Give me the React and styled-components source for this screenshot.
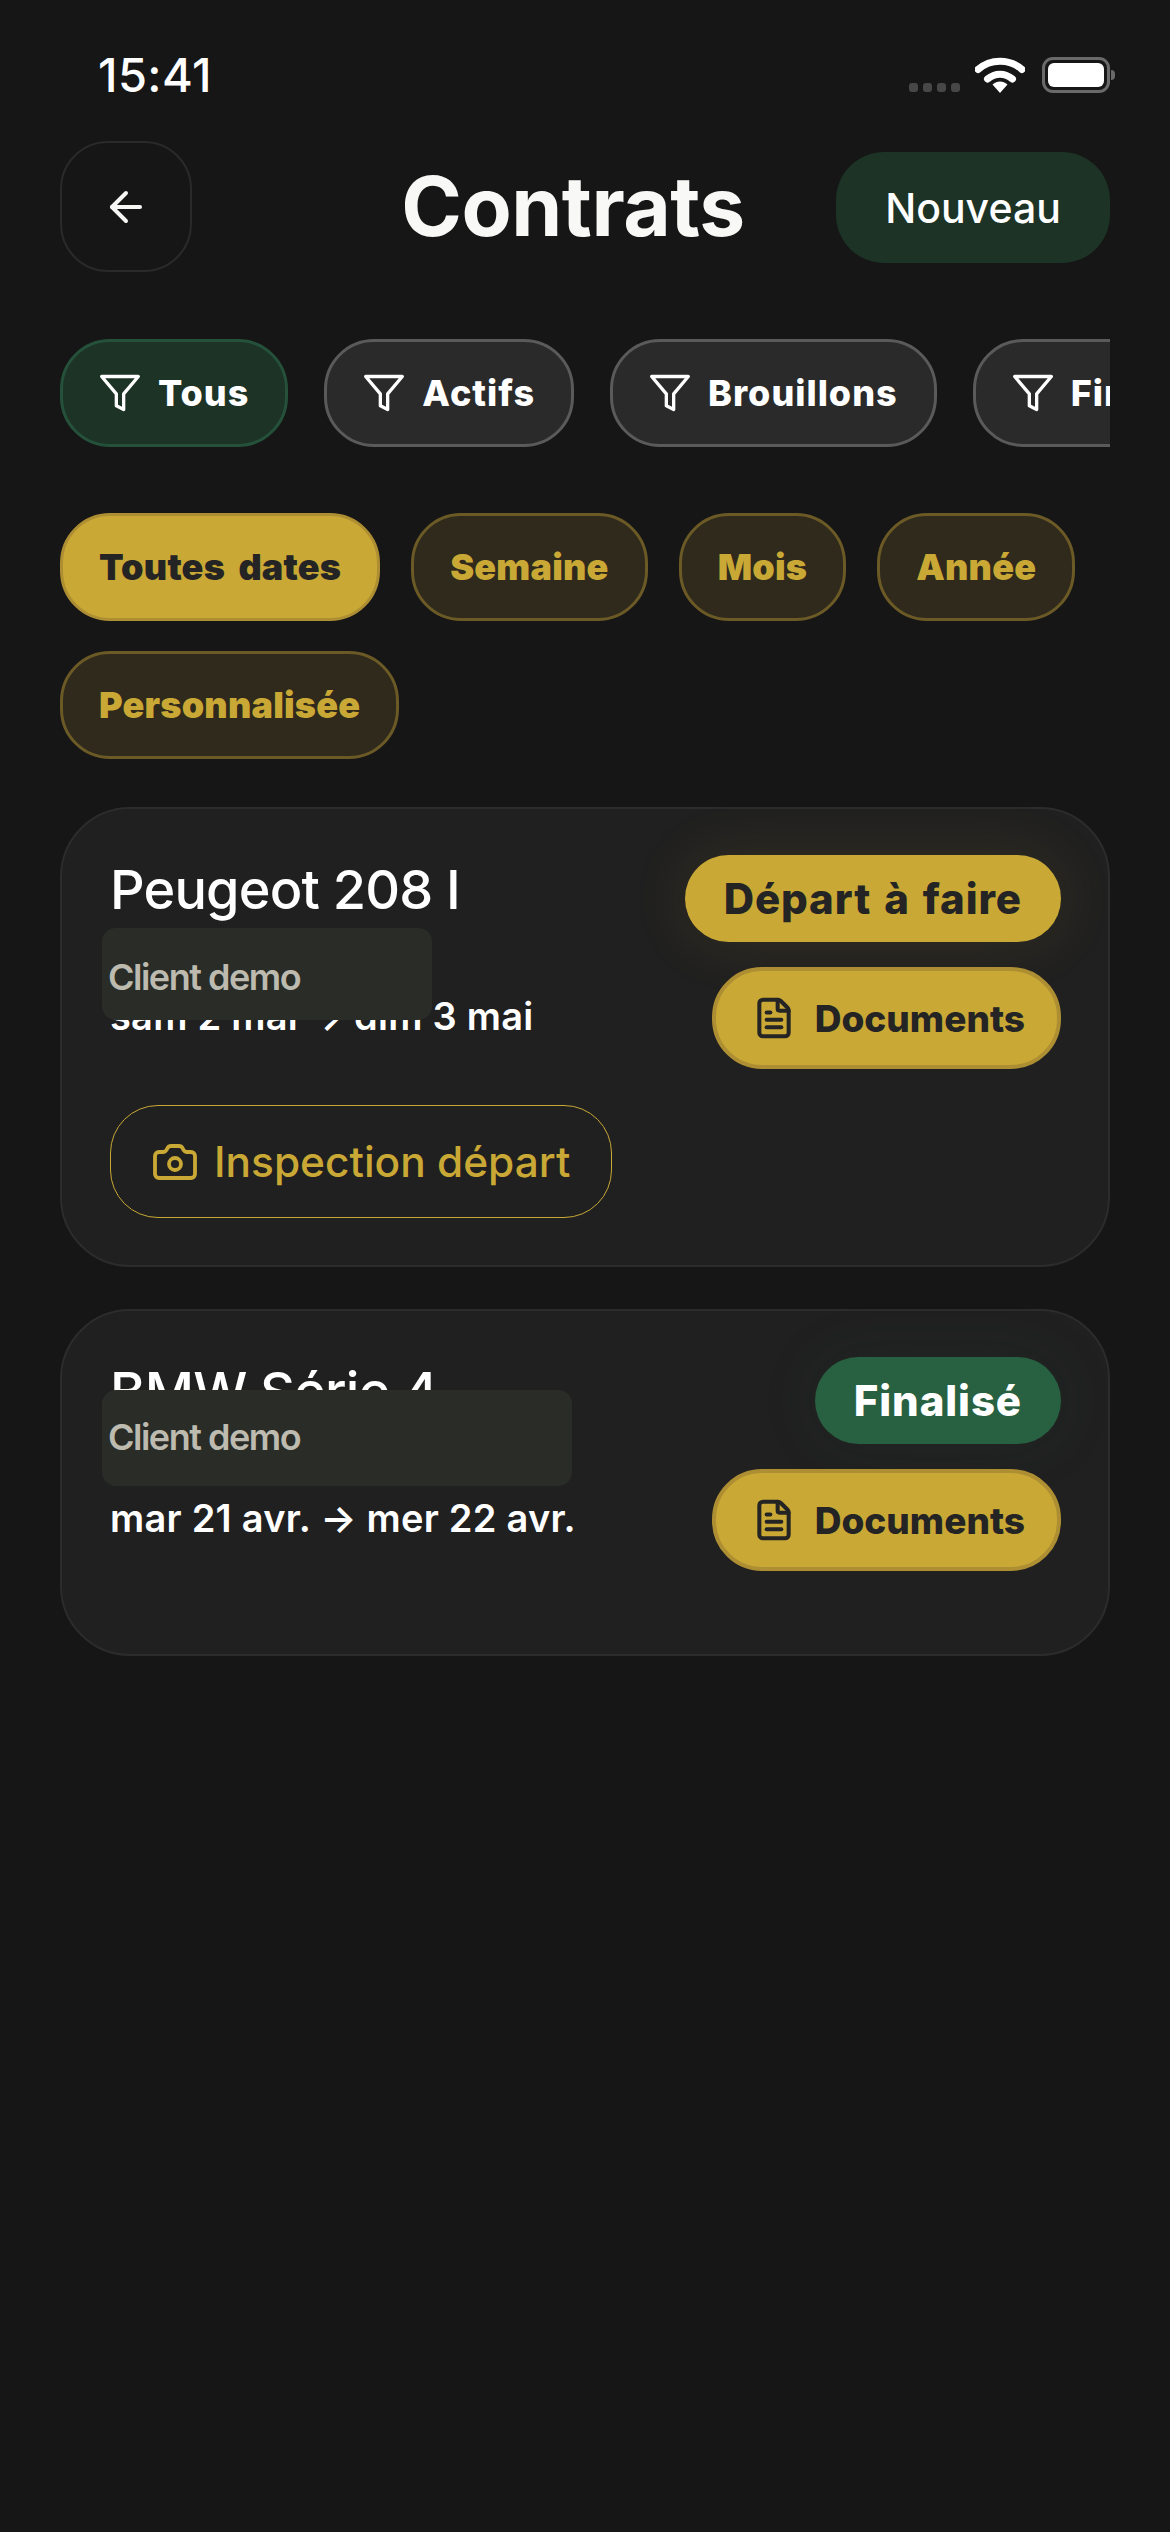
import React from 'react';
import styled, { createGlobalStyle } from 'styled-components';
import { ArrowLeft, Camera, FileText } from 'lucide-react';
import { FiFilter } from 'react-icons/fi';

const GlobalStyle = createGlobalStyle`
  html, body { margin: 0; padding: 0; background: #161616; }
  * { box-sizing: border-box; }
`;

const Screen = styled.div`
  width: 1170px;
  height: 2532px;
  background: #161616;
  color: #fff;
  font-family: Inter, "Liberation Sans", sans-serif;
  overflow: hidden;
  padding: 0 60px;
`;

// Status bar
const StatusBar = styled.div`
  height: 141px;
  display: flex;
  justify-content: space-between;
  padding: 47px 0 0 38px;
`;

const Time = styled.div`
  font-size: 47px;
  line-height: 56px;
  font-weight: 500;
  letter-spacing: 0.4px;
`;

const StatusIcons = styled.div`
  display: flex;
  align-items: flex-end;
  height: 36px;
  margin: 10px -6px 0 0;
`;

const Dots = styled.div`
  display: flex;
  gap: 5px;
  margin: 0 15px 0 0;
  padding-bottom: 1px;
`;

const Dot = styled.span`
  width: 9px;
  height: 9px;
  border-radius: 3px;
  background: #474747;
`;

const Battery = styled.div`
  position: relative;
  width: 68px;
  height: 36px;
  margin-left: 17px;
  margin-right: 6px;
  border: 3px solid #6a6a6a;
  border-radius: 11px;
  padding: 3px;
  &::before {
    content: '';
    display: block;
    height: 100%;
    background: #fff;
    border-radius: 6px;
  }
  &::after {
    content: '';
    position: absolute;
    right: -8px;
    top: 10px;
    width: 4px;
    height: 10px;
    border-radius: 0 4px 4px 0;
    background: #6a6a6a;
  }
`;

// Header
const Header = styled.div`
  display: grid;
  grid-template-columns: 132px 1fr 274px;
  align-items: center;
  height: 131px;
`;

const BackButton = styled.div`
  width: 132px;
  height: 131px;
  border: 2px solid #2a2a2a;
  border-radius: 48px;
  display: flex;
  align-items: center;
  justify-content: center;
  color: #f6f6f4;
`;

const Title = styled.h1`
  margin: 0;
  padding-left: 118px;
  text-align: center;
  font-size: 82px;
  line-height: 100px;
  font-weight: 700;
  color: #f8f8f6;
  letter-spacing: -0.5px;
`;

const NewButton = styled.div`
  height: 111px;
  margin-top: 2px;
  border-radius: 48px;
  background: #1c3326;
  display: flex;
  align-items: center;
  justify-content: center;
  font-size: 41px;
  font-weight: 500;
`;

// Filters
const FilterRow = styled.div`
  display: flex;
  gap: 36px;
  margin-top: 67px;
  overflow: hidden;
`;

const FilterChip = styled.div`
  flex: none;
  height: 108px;
  padding: 0 36px 0 35px;
  display: flex;
  align-items: center;
  gap: 16px;
  border-radius: 50px;
  border: 3px solid ${(p) => (p.$active ? '#25513a' : '#5a5a5a')};
  background: ${(p) => (p.$active ? '#1c3326' : '#2a2a2a')};
  font-size: 36px;
  font-weight: 800;
  letter-spacing: 1px;
`;

const DateRow = styled.div`
  display: flex;
  flex-wrap: wrap;
  gap: 30px 31px;
  margin-top: 66px;
`;

const DateChip = styled.div`
  height: 108px;
  padding: 0 36px;
  display: flex;
  align-items: center;
  border-radius: 50px;
  border: 3px solid ${(p) => (p.$active ? '#ad8e33' : '#6b5a26')};
  background: ${(p) => (p.$active ? '#c9a835' : '#2f2a1c')};
  color: ${(p) => (p.$active ? '#242424' : '#c9a835')};
  font-size: 36px;
  font-weight: 900;
  letter-spacing: 0.2px;
  word-spacing: 6px;
`;

// Cards
const CardList = styled.div`
  display: flex;
  flex-direction: column;
  gap: 42px;
  margin-top: 48px;
`;

const Card = styled.div`
  position: relative;
  height: ${(p) => p.$height}px;
  padding: 46px 47px 46px 48px;
  background: #202020;
  border: 2px solid #2c2c2c;
  border-radius: 70px;
`;

const CardTop = styled.div`
  display: flex;
  justify-content: space-between;
  align-items: flex-start;
`;

const CardInfo = styled.div`
  display: flex;
  flex-direction: column;
  padding-top: 2px;
  white-space: nowrap;
`;

const CarName = styled.div`
  font-size: 54px;
  line-height: 66px;
  font-weight: 500;
  letter-spacing: -0.8px;
`;

const Dates = styled.div`
  margin-top: 70px;
  font-size: 38px;
  line-height: 46px;
  font-weight: 600;
  letter-spacing: 0.25px;
`;

const ClientTag = styled.div`
  position: absolute;
  left: 40px;
  top: ${(p) => p.$top}px;
  width: ${(p) => p.$width}px;
  height: ${(p) => p.$height}px;
  padding: ${(p) => p.$textTop}px 6px 0;
  background: #2a2c28;
  border-radius: 14px;
  color: #bdbbaf;
  font-size: 36px;
  line-height: 44px;
  font-weight: 600;
  letter-spacing: -1.5px;
`;

const CardActions = styled.div`
  display: flex;
  flex-direction: column;
  align-items: flex-end;
  gap: 25px;
`;

const StatusBadge = styled.div`
  height: 87px;
  padding: 0 39px;
  display: flex;
  align-items: center;
  border-radius: 44px;
  font-size: 42px;
  font-weight: 800;
  letter-spacing: 0.9px;
  word-spacing: 3px;
  white-space: nowrap;
  background: ${(p) => (p.$done ? '#286141' : '#c9a835')};
  color: ${(p) => (p.$done ? '#fff' : '#242424')};
  box-shadow: 0 0 60px ${(p) => (p.$done ? 'rgba(40, 97, 65, 0.12)' : 'rgba(201, 168, 53, 0.12)')};
`;

const DocButton = styled.div`
  height: 102px;
  padding: 0 32px 0 36px;
  display: flex;
  align-items: center;
  gap: 19px;
  border-radius: 50px;
  border: 4px solid #ad8e33;
  background: #c9a835;
  color: #242424;
  font-size: 37px;
  font-weight: 800;
`;

const InspectButton = styled.div`
  display: inline-flex;
  align-items: center;
  gap: 15px;
  height: 113px;
  width: 502px;
  margin-top: 36px;
  padding: 0 40px;
  border: 1.5px solid #c9a835;
  border-radius: 48px;
  color: #c9a835;
  font-size: 42.4px;
  font-weight: 500;
  white-space: nowrap;
`;

const WifiIcon = () => (
  <svg width="50" height="36" viewBox="0 0 50 36" fill="none">
    <path d="M3 12.5C15.5 1.5 34.5 1.5 47 12.5" stroke="#fff" strokeWidth="7" strokeLinecap="round" />
    <path d="M12.5 22C20 15.5 30 15.5 37.5 22" stroke="#fff" strokeWidth="7" strokeLinecap="round" />
    <path d="M17.5 27.5C22 23.5 28 23.5 32.5 27.5L25 36Z" fill="#fff" />
  </svg>
);

const filters = [
  { label: 'Tous', active: true },
  { label: 'Actifs' },
  { label: 'Brouillons' },
  { label: 'Finalisés' },
];

const dateFilters = [
  { label: 'Toutes dates', active: true },
  { label: 'Semaine' },
  { label: 'Mois' },
  { label: 'Année' },
  { label: 'Personnalisée' },
];

export default function App() {
  return (
    <>
      <GlobalStyle />
      <Screen>
        <StatusBar>
          <Time>15:41</Time>
          <StatusIcons>
            <Dots>
              <Dot /><Dot /><Dot /><Dot />
            </Dots>
            <WifiIcon />
            <Battery />
          </StatusIcons>
        </StatusBar>

        <Header>
          <BackButton>
            <ArrowLeft size={48} strokeWidth={2} />
          </BackButton>
          <Title>Contrats</Title>
          <NewButton>Nouveau</NewButton>
        </Header>

        <FilterRow>
          {filters.map((f) => (
            <FilterChip key={f.label} $active={f.active}>
              <FiFilter size={44} strokeWidth={1.8} />
              {f.label}
            </FilterChip>
          ))}
        </FilterRow>

        <DateRow>
          {dateFilters.map((f) => (
            <DateChip key={f.label} $active={f.active}>{f.label}</DateChip>
          ))}
        </DateRow>

        <CardList>
          <Card $height={460}>
            <CardTop>
              <CardInfo>
                <CarName>Peugeot 208 I</CarName>
                <Dates>sam 2 mai → dim 3 mai</Dates>
              </CardInfo>
              <CardActions>
                <StatusBadge>Départ à faire</StatusBadge>
                <DocButton>
                  <FileText size={44} strokeWidth={2.2} />
                  Documents
                </DocButton>
              </CardActions>
            </CardTop>
            <InspectButton>
              <Camera size={48} strokeWidth={1.9} />
              Inspection départ
            </InspectButton>
            <ClientTag $top={119} $width={330} $height={92} $textTop={27}>Client demo</ClientTag>
          </Card>

          <Card $height={347}>
            <CardTop>
              <CardInfo>
                <CarName>BMW Série 4</CarName>
                <Dates>mar 21 avr. → mer 22 avr.</Dates>
              </CardInfo>
              <CardActions>
                <StatusBadge $done>Finalisé</StatusBadge>
                <DocButton>
                  <FileText size={44} strokeWidth={2.2} />
                  Documents
                </DocButton>
              </CardActions>
            </CardTop>
            <ClientTag $top={79} $width={470} $height={96} $textTop={25}>Client demo</ClientTag>
          </Card>
        </CardList>
      </Screen>
    </>
  );
}
